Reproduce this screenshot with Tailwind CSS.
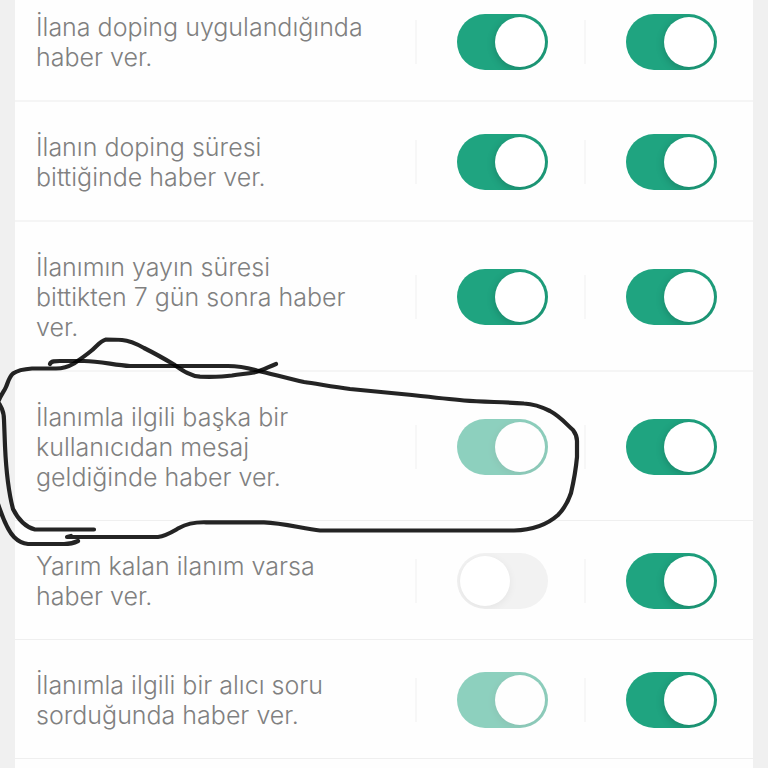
<!DOCTYPE html>
<html lang="tr">

<head>
    <meta charset="UTF-8">
    <meta name="viewport" content="width=device-width, initial-scale=1.0">
    <title>Bildirim Ayarları</title>
    <script src="https://cdn.jsdelivr.net/npm/@tailwindcss/browser@4"></script>
    <style>
        .switch {
            appearance: none;
            flex-shrink: 0;
            width: 91px;
            height: 56px;
            padding: 3px;
            border-radius: 28px;
            background: #f2f2f2;
            overflow: hidden;
        }

        .switch::before {
            content: "";
            display: block;
            width: 50px;
            height: 50px;
            border-radius: 50%;
            background: #fff;
            box-shadow: 0 2px 8px rgba(0, 0, 0, 0.06);
        }

        .switch:checked {
            background: #1fa480;
        }

        .switch:checked::before {
            margin-left: 35px;
            box-shadow: 0 2px 8px rgba(0, 0, 0, 0.2);
        }

        .switch:disabled {
            opacity: 0.5;
        }
    </style>
</head>

<body class="relative h-screen overflow-hidden bg-[#f0f0f0] font-['Inter',sans-serif]">

    <!-- Settings list -->
    <main class="mx-[15px] -mt-[18px] bg-[#fefefe] text-[25px] leading-[30px] font-light text-[#808080]">
        <div class="flex items-center border-b-2 border-[#f5f5f5] pt-[30px] pb-7">
            <label id="l1" for="s1" class="min-w-0 flex-1 pl-[21px]">İlana doping uygulandığında<br>haber ver.</label>
            <div class="flex w-[169px] items-center gap-10">
                <span class="h-11 w-0.5 bg-[#f7f7f7]"></span>
                <input id="s1" type="checkbox" class="switch" checked>
            </div>
            <div class="flex w-[169px] items-center gap-10">
                <span class="h-11 w-0.5 bg-[#f7f7f7]"></span>
                <input type="checkbox" class="switch" aria-labelledby="l1" checked>
            </div>
        </div>

        <div class="flex items-center border-b-2 border-[#f5f5f5] pt-[30px] pb-7">
            <label id="l2" for="s2" class="min-w-0 flex-1 pl-[21px]">İlanın doping süresi<br>bittiğinde haber ver.</label>
            <div class="flex w-[169px] items-center gap-10">
                <span class="h-11 w-0.5 bg-[#f7f7f7]"></span>
                <input id="s2" type="checkbox" class="switch" checked>
            </div>
            <div class="flex w-[169px] items-center gap-10">
                <span class="h-11 w-0.5 bg-[#f7f7f7]"></span>
                <input type="checkbox" class="switch" aria-labelledby="l2" checked>
            </div>
        </div>

        <div class="flex items-center border-b-2 border-[#f5f5f5] pt-[30px] pb-7">
            <label id="l3" for="s3" class="min-w-0 flex-1 pl-[21px]">İlanımın yayın süresi<br>bittikten 7 gün sonra haber<br>ver.</label>
            <div class="flex w-[169px] items-center gap-10">
                <span class="h-11 w-0.5 bg-[#f7f7f7]"></span>
                <input id="s3" type="checkbox" class="switch" checked>
            </div>
            <div class="flex w-[169px] items-center gap-10">
                <span class="h-11 w-0.5 bg-[#f7f7f7]"></span>
                <input type="checkbox" class="switch" aria-labelledby="l3" checked>
            </div>
        </div>

        <div class="flex items-center border-b border-[#efefef] pt-[30px] pb-7">
            <label id="l4" for="s4" class="min-w-0 flex-1 pl-[21px]">İlanımla ilgili başka bir<br>kullanıcıdan mesaj<br>geldiğinde haber ver.</label>
            <div class="flex w-[169px] items-center gap-10">
                <span class="h-11 w-0.5 bg-[#f7f7f7]"></span>
                <input id="s4" type="checkbox" class="switch" checked disabled>
            </div>
            <div class="flex w-[169px] items-center gap-10">
                <span class="h-11 w-0.5 bg-[#f7f7f7]"></span>
                <input type="checkbox" class="switch" aria-labelledby="l4" checked>
            </div>
        </div>

        <div class="flex items-center border-b border-[#efefef] pt-[30px] pb-7">
            <label id="l5" for="s5" class="min-w-0 flex-1 pl-[21px]">Yarım kalan ilanım varsa<br>haber ver.</label>
            <div class="flex w-[169px] items-center gap-10">
                <span class="h-11 w-0.5 bg-[#f7f7f7]"></span>
                <input id="s5" type="checkbox" class="switch">
            </div>
            <div class="flex w-[169px] items-center gap-10">
                <span class="h-11 w-0.5 bg-[#f7f7f7]"></span>
                <input type="checkbox" class="switch" aria-labelledby="l5" checked>
            </div>
        </div>

        <div class="flex items-center border-b border-[#efefef] pt-[30px] pb-7">
            <label id="l6" for="s6" class="min-w-0 flex-1 pl-[21px]">İlanımla ilgili bir alıcı soru<br>sorduğunda haber ver.</label>
            <div class="flex w-[169px] items-center gap-10">
                <span class="h-11 w-0.5 bg-[#f7f7f7]"></span>
                <input id="s6" type="checkbox" class="switch" checked disabled>
            </div>
            <div class="flex w-[169px] items-center gap-10">
                <span class="h-11 w-0.5 bg-[#f7f7f7]"></span>
                <input type="checkbox" class="switch" aria-labelledby="l6" checked>
            </div>
        </div>

        <div class="h-10"></div>
    </main>

    <!-- Pen marks around the message setting -->
    <svg class="pointer-events-none absolute top-0 left-0" width="768" height="768" viewBox="0 0 768 768" fill="none" stroke="#000" stroke-opacity="0.86" stroke-width="4.2" stroke-linecap="round" stroke-linejoin="round" aria-hidden="true">
        <path d="M276 364C268 367 262 371 254 372.500C246 374 240 374 232 375.500C222 377 210 377 200 376.700C190 376 182 370 174 364.500C163 358 154 353 144 348C136 343.500 130 340.500 122 340C116 339.500 111 339.500 106 339.500C100 341 97 346 91 351C85 356 79 360 74 363.500C68 367 63 368.500 56 368.500L32 368.500C25 369 18 370 13 373.500C8 378 8 384 5 389C2 394 0 397 -2 402L0 405C3 410 4 413 4 420L5 446C6 468 8 490 13 509C18 519 25 527 35 529.500L94 529.500" />
        <path d="M-2 504C2 515 6 529 14 537C19 542 23 543.500 28 544L64 544C69 544 74 543 78 541" />
        <path d="M50 364C51 361 55 361 60 361L84 361C100 361 114 365 130 366L228 366C240 366 248 368 257 370.500C272 374 290 379 304 382C318 384 334 387 350 389C372 391 392 393 412 395C430 397 448 399 464 400.500C484 402 504 402 524 403.500C534 404 542 407 550 411C561 417 566 424 573 430C576 434 577 436 577 441L577 457C576 468 574 480 571 493C568 502 563 510 558 515C549 523 537 530 514 530.500L320 530.500C304 529 284 523 264 522.300L206 522.300C194 522 186 524 179 528C172 532 166 536 158 537L67 537L71 536" />
    </svg>

</body>

</html>
